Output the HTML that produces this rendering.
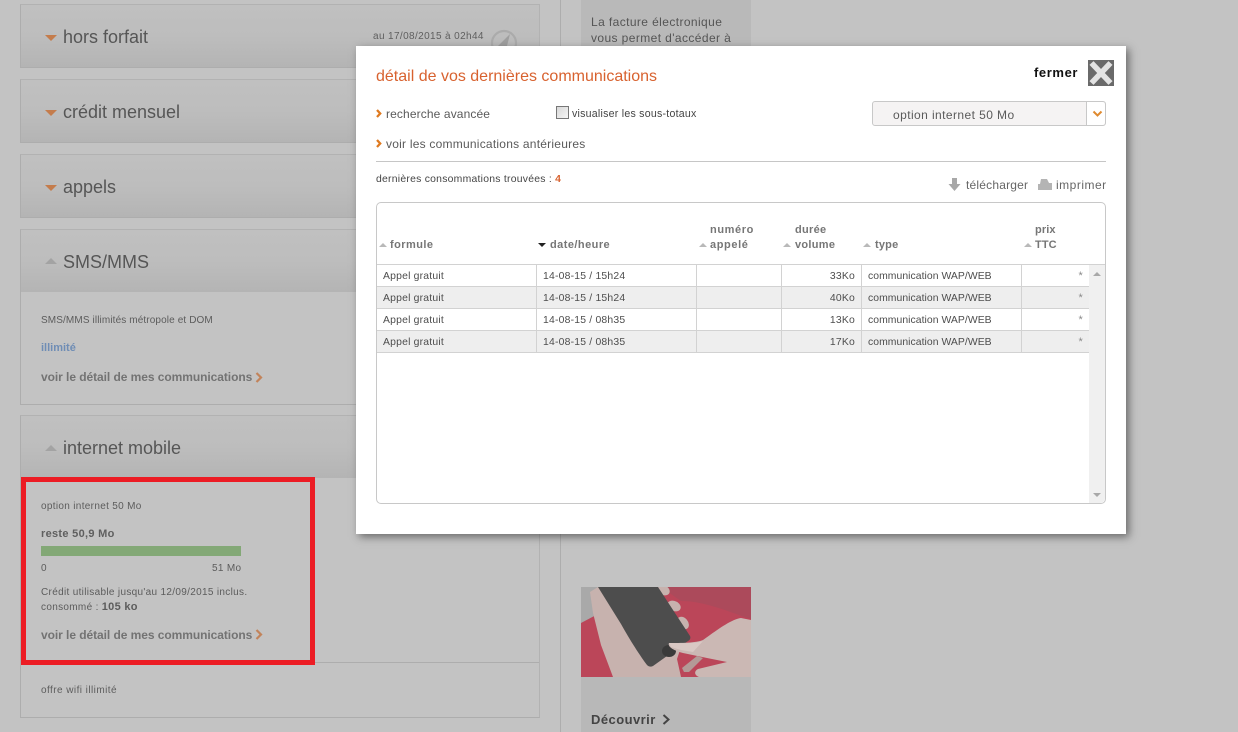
<!DOCTYPE html>
<html lang="fr">
<head>
<meta charset="utf-8">
<title>détail de vos dernières communications</title>
<style>
html,body{margin:0;padding:0;width:1238px;height:732px;overflow:hidden;background:#c3c3c3;font-family:"Liberation Sans",Arial,sans-serif;}
.a{position:absolute;white-space:nowrap;}
.panel{position:absolute;left:20px;width:518px;border:1px solid #adadad;border-color:#b2b2b2 #b2b2b2 #adadad #adadad;}
.head{height:62px;background:linear-gradient(#c0c0c0 0,#bdbdbd 50%,#b4b4b4 100%);}
.ttl{position:absolute;font-size:18px;color:#565656;white-space:nowrap;line-height:20px;}
.tri-d{position:absolute;width:0;height:0;border-left:6px solid transparent;border-right:6px solid transparent;border-top:6px solid #c47c4c;}
.tri-u{position:absolute;width:0;height:0;border-left:6px solid transparent;border-right:6px solid transparent;border-bottom:6px solid #a3a3a3;}
.s10{font-size:10px;color:#5c5c5c;letter-spacing:.32px;}
.link{font-size:12px;font-weight:bold;color:#737373;letter-spacing:-.06px;}
.modal{position:absolute;left:356px;top:46px;width:770px;height:488px;background:#fff;box-shadow:3px 3px 8px rgba(60,60,60,.65);}
.m{position:absolute;white-space:nowrap;color:#5a5a5a;}
.th{position:absolute;font-size:11px;font-weight:bold;color:#767676;white-space:nowrap;line-height:15px;letter-spacing:.45px;}
.sort{position:absolute;width:0;height:0;border-left:4px solid transparent;border-right:4px solid transparent;border-bottom:4px solid #b9b9b9;}
.row{position:absolute;left:0;width:712px;height:21px;border-bottom:1px solid #d2d2d2;}
.row.g{background:#eeeeee;}
.c{position:absolute;top:0;height:21px;line-height:23px;font-size:10.4px;color:#4d4d4d;white-space:nowrap;box-sizing:border-box;border-right:1px solid #d2d2d2;letter-spacing:.2px;}
.c.t{letter-spacing:.05px;}
.c.s{border-right:0;color:#8a8a8a;font-size:11px;text-align:right;padding-right:6px;}
</style>
</head>
<body>
<!-- left panels -->
<div class="panel" style="top:4px;height:62px;"><div class="head"></div></div>
<div class="panel" style="top:79px;height:62px;"><div class="head"></div></div>
<div class="panel" style="top:154px;height:62px;"><div class="head"></div></div>
<div class="panel" style="top:229px;height:174px;"><div class="head"></div></div>
<div class="panel" style="top:415px;height:301px;"><div class="head"></div></div>
<div class="a" style="left:21px;top:662px;width:518px;height:1px;background:#adadad;"></div>

<div class="tri-d" style="left:45px;top:35px;"></div><div class="ttl" style="left:63px;top:27px;">hors forfait</div>
<div class="a s10" style="left:373px;top:31px;letter-spacing:.38px;color:#5f5f5f;">au 17/08/2015 à 02h44</div>
<svg class="a" style="left:490px;top:29px;" width="28" height="17" viewBox="0 0 28 17"><circle cx="14" cy="14" r="12" fill="none" stroke="#ababab" stroke-width="2.2"/><path d="M8 17 L20 5 L17 17Z" fill="#9f9f9f"/></svg>
<div class="tri-d" style="left:45px;top:110px;"></div><div class="ttl" style="left:63px;top:102px;">crédit mensuel</div>
<div class="tri-d" style="left:45px;top:185px;"></div><div class="ttl" style="left:63px;top:177px;">appels</div>
<div class="tri-u" style="left:45px;top:258px;"></div><div class="ttl" style="left:63px;top:252px;">SMS/MMS</div>
<div class="a s10" style="left:41px;top:315px;letter-spacing:.12px;">SMS/MMS illimités métropole et DOM</div>
<div class="a" style="left:41px;top:342px;font-size:11px;font-weight:bold;color:#6f8db5;">illimité</div>
<div class="a link" style="left:41px;top:370px;">voir le détail de mes communications</div>
<svg class="a" style="left:255px;top:372px;" width="8" height="11" viewBox="0 0 8 11"><path d="M1.5 1 L6 5.5 L1.5 10" fill="none" stroke="#c2835a" stroke-width="2.2"/></svg>

<div class="tri-u" style="left:45px;top:445px;"></div><div class="ttl" style="left:63px;top:438px;">internet mobile</div>
<div class="a s10" style="left:41px;top:501px;">option internet 50 Mo</div>
<div class="a" style="left:41px;top:528px;font-size:11px;font-weight:bold;color:#5f5f5f;letter-spacing:.3px;">reste 50,9 Mo</div>
<div class="a" style="left:41px;top:546px;width:200px;height:10px;background:#83a876;"></div>
<div class="a s10" style="left:41px;top:563px;">0</div>
<div class="a s10" style="left:212px;top:563px;">51 Mo</div>
<div class="a s10" style="left:41px;top:587px;">Crédit utilisable jusqu'au 12/09/2015 inclus.</div>
<div class="a s10" style="left:41px;top:601px;">consommé : <b style="font-size:11px;letter-spacing:.3px;">105 ko</b></div>
<div class="a link" style="left:41px;top:628px;">voir le détail de mes communications</div>
<svg class="a" style="left:255px;top:629px;" width="8" height="11" viewBox="0 0 8 11"><path d="M1.5 1 L6 5.5 L1.5 10" fill="none" stroke="#c2835a" stroke-width="2.2"/></svg>
<div class="a s10" style="left:41px;top:685px;letter-spacing:.44px;">offre wifi illimité</div>
<!-- red highlight -->
<div class="a" style="left:21px;top:477px;width:284px;height:178px;border:5px solid #ec1c24;"></div>

<!-- middle line -->
<div class="a" style="left:560px;top:0;width:1px;height:732px;background:#adadad;"></div>

<!-- right column -->
<div class="a" style="left:581px;top:0;width:170px;height:46px;background:#b9b9b9;"></div>
<div class="a" style="left:591px;top:14px;font-size:12px;line-height:16px;color:#555;letter-spacing:.4px;">La facture électronique<br>vous permet d'accéder à</div>
<svg class="a" style="left:581px;top:587px;" width="170" height="90" viewBox="0 0 170 90">
<rect width="170" height="90" fill="#bb4659"/>
<path d="M80 0H170V32C150 26 125 14 100 14Z" fill="#ac4a5b"/>
<path d="M0 0H34V18L0 36Z" fill="#a9a9a9"/>
<path d="M9 5L17 0H60L100 60L96 72L100 90H32L20 58L12 26Z" fill="#c7b2ae"/>
<ellipse cx="82" cy="3" rx="7" ry="5" fill="#c7b2ae" transform="rotate(25 82 3)"/>
<ellipse cx="93" cy="19" rx="7" ry="5" fill="#c7b2ae" transform="rotate(25 93 19)"/>
<ellipse cx="102" cy="36" rx="7" ry="5" fill="#c7b2ae" transform="rotate(50 102 36)"/>
<path d="M17 0H77L109 49C110 51 109 53 107 54L72 79C70 80 68 80 66 78C60 70 50 55 40 37Z" fill="#4d4d4d"/>
<ellipse cx="88" cy="64" rx="7" ry="6" fill="#3a3a3a"/>
<path d="M88 56C100 56 115 56 122 53C132 46 150 32 160 31L170 33V90H118C113 88 113 84 117 82L146 75L126 71L102 66C94 64 86 60 88 56Z" fill="#cbb8b4"/>
<path d="M88 56C100 56 112 57 122 54L112 65L100 63L90 60Z" fill="#d9c8c4"/>
<path d="M101 81L116 69L122 71L108 85L103 85Z" fill="#b39a97"/>
</svg>
<div class="a" style="left:581px;top:677px;width:170px;height:55px;background:#b8b8b8;"></div>
<div class="a" style="left:591px;top:712px;font-size:13px;font-weight:bold;color:#444;letter-spacing:.45px;">Découvrir</div>
<svg class="a" style="left:662px;top:714px;" width="9" height="11" viewBox="0 0 9 11"><path d="M1.5 1 L6.5 5.5 L1.5 10" fill="none" stroke="#444" stroke-width="2"/></svg>

<!-- modal -->
<div class="modal">
  <div class="m" style="left:20px;top:22px;font-size:16px;color:#d8622f;">détail de vos dernières communications</div>
  <div class="m" style="left:678px;top:19px;font-size:13px;font-weight:bold;color:#111;letter-spacing:.6px;">fermer</div>
  <svg class="a" style="left:732px;top:14px;" width="26" height="26" viewBox="0 0 26 26"><rect width="26" height="26" fill="#6a6a6a"/><path d="M3.5 3 L22.5 23 M22.5 3 L3.5 23" stroke="#e3e3e3" stroke-width="5.6"/></svg>

  <svg class="a" style="left:20px;top:63px;" width="6" height="9" viewBox="0 0 6 9"><path d="M1 1 L4.2 4.5 L1 8" fill="none" stroke="#df7a20" stroke-width="2.3"/></svg>
  <div class="m" style="left:30px;top:61px;font-size:12px;letter-spacing:.12px;">recherche avancée</div>
  <div class="a" style="left:200px;top:60px;width:11px;height:11px;border:1px solid #777;background:linear-gradient(135deg,#d8d8d8,#f6f6f6);"></div>
  <div class="m" style="left:216px;top:62px;font-size:10.6px;color:#444;letter-spacing:.24px;">visualiser les sous-totaux</div>

  <div class="a" style="left:516px;top:55px;width:232px;height:23px;border:1px solid #c8c8c8;border-radius:3px;background:#f5f3f3;"></div>
  <div class="a" style="left:730px;top:56px;width:1px;height:23px;background:#c8c8c8;"></div>
  <div class="a" style="left:731px;top:56px;width:18px;height:23px;background:#fff;border-radius:0 3px 3px 0;"></div>
  <div class="m" style="left:537px;top:62px;font-size:12px;letter-spacing:.42px;">option internet 50 Mo</div>
  <svg class="a" style="left:736px;top:64px;" width="11" height="8" viewBox="0 0 11 8"><path d="M1.5 1.5 L5.5 5.5 L9.5 1.5" fill="none" stroke="#df8a30" stroke-width="2"/></svg>

  <svg class="a" style="left:20px;top:93px;" width="6" height="9" viewBox="0 0 6 9"><path d="M1 1 L4.2 4.5 L1 8" fill="none" stroke="#df7a20" stroke-width="2.3"/></svg>
  <div class="m" style="left:30px;top:91px;font-size:12px;letter-spacing:.23px;">voir les communications antérieures</div>
  <div class="a" style="left:20px;top:115px;width:730px;height:1px;background:#c6c6c6;"></div>

  <div class="m" style="left:20px;top:128px;font-size:10.4px;color:#444;letter-spacing:.25px;">dernières consommations trouvées : <span style="color:#d8622f;font-weight:bold;">4</span></div>
  <svg class="a" style="left:592px;top:132px;" width="13" height="13" viewBox="0 0 13 13"><path d="M4 0H9V6H12.5L6.5 13L0.5 6H4Z" fill="#a8a8a8"/></svg>
  <div class="m" style="left:610px;top:132px;font-size:12px;color:#666;letter-spacing:.2px;">télécharger</div>
  <svg class="a" style="left:682px;top:133px;" width="14" height="11" viewBox="0 0 14 11"><path d="M3 0H9L11 4H14V11H0V5H2Z" fill="#b4b4b4"/></svg>
  <div class="m" style="left:700px;top:132px;font-size:12px;color:#666;letter-spacing:.5px;">imprimer</div>

  <!-- table box -->
  <div class="a" style="left:20px;top:156px;width:728px;height:300px;border:1px solid #c8c8c8;border-radius:5px;">
    <div class="sort" style="left:2px;top:40px;"></div>
    <div class="th" style="left:13px;top:35px;">formule</div>
    <div class="sort" style="left:161px;top:40px;border-bottom:0;border-top:4px solid #222;"></div>
    <div class="th" style="left:173px;top:35px;">date/heure</div>
    <div class="sort" style="left:322px;top:40px;"></div>
    <div class="th" style="left:333px;top:20px;letter-spacing:.6px;">numéro<br>appelé</div>
    <div class="sort" style="left:406px;top:40px;"></div>
    <div class="th" style="left:418px;top:20px;letter-spacing:.3px;">durée<br>volume</div>
    <div class="sort" style="left:486px;top:40px;"></div>
    <div class="th" style="left:498px;top:35px;letter-spacing:.2px;">type</div>
    <div class="sort" style="left:647px;top:40px;"></div>
    <div class="th" style="left:658px;top:20px;letter-spacing:.1px;">prix<br>TTC</div>
    <div class="a" style="left:0;top:61px;width:728px;height:1px;background:#d2d2d2;"></div>

    <div class="row" style="top:62px;">
      <div class="c" style="left:0;width:160px;padding-left:6px;">Appel gratuit</div><div class="c" style="left:160px;width:160px;padding-left:6px;">14-08-15 / 15h24</div><div class="c" style="left:320px;width:85px;"></div><div class="c" style="left:405px;width:80px;text-align:right;padding-right:6px;">33Ko</div><div class="c t" style="left:485px;width:160px;padding-left:6px;">communication WAP/WEB</div><div class="c s" style="left:645px;width:67px;">*</div>
    </div>
    <div class="row g" style="top:84px;">
      <div class="c" style="left:0;width:160px;padding-left:6px;">Appel gratuit</div><div class="c" style="left:160px;width:160px;padding-left:6px;">14-08-15 / 15h24</div><div class="c" style="left:320px;width:85px;"></div><div class="c" style="left:405px;width:80px;text-align:right;padding-right:6px;">40Ko</div><div class="c t" style="left:485px;width:160px;padding-left:6px;">communication WAP/WEB</div><div class="c s" style="left:645px;width:67px;">*</div>
    </div>
    <div class="row" style="top:106px;">
      <div class="c" style="left:0;width:160px;padding-left:6px;">Appel gratuit</div><div class="c" style="left:160px;width:160px;padding-left:6px;">14-08-15 / 08h35</div><div class="c" style="left:320px;width:85px;"></div><div class="c" style="left:405px;width:80px;text-align:right;padding-right:6px;">13Ko</div><div class="c t" style="left:485px;width:160px;padding-left:6px;">communication WAP/WEB</div><div class="c s" style="left:645px;width:67px;">*</div>
    </div>
    <div class="row g" style="top:128px;">
      <div class="c" style="left:0;width:160px;padding-left:6px;">Appel gratuit</div><div class="c" style="left:160px;width:160px;padding-left:6px;">14-08-15 / 08h35</div><div class="c" style="left:320px;width:85px;"></div><div class="c" style="left:405px;width:80px;text-align:right;padding-right:6px;">17Ko</div><div class="c t" style="left:485px;width:160px;padding-left:6px;">communication WAP/WEB</div><div class="c s" style="left:645px;width:67px;">*</div>
    </div>
    <!-- scrollbar -->
    <div class="a" style="left:712px;top:62px;width:16px;height:238px;background:#f0f0f0;border-radius:0 0 5px 0;"></div>
    <div class="sort" style="left:716px;top:69px;border-bottom-color:#a8a8a8;"></div>
    <div class="sort" style="left:716px;top:290px;border-bottom:0;border-top:4px solid #a8a8a8;"></div>
  </div>
</div>
</body>
</html>
